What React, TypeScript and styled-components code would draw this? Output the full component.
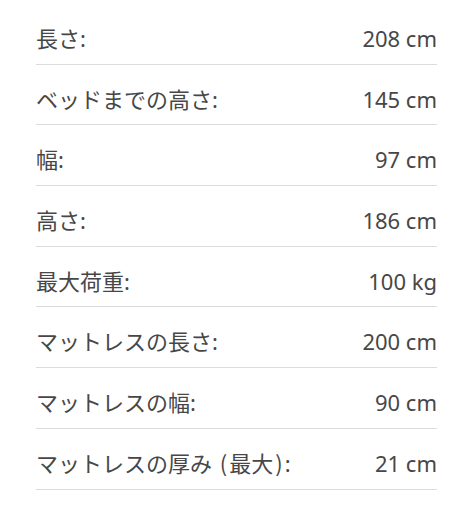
import React from "react";
import styled, { createGlobalStyle } from "styled-components";

const Global = createGlobalStyle`
  html, body { margin: 0; padding: 0; background: #ffffff; }
  body { font-family: "Noto Sans", "Noto Sans CJK JP", sans-serif; }
`;

const List = styled.dl`
  margin: 0;
  padding: 4px 36px 0 36px;
  display: flex;
  flex-direction: column;
`;

const Row = styled.div`
  display: flex;
  justify-content: space-between;
  align-items: center;
  padding: 19px 0 10.7px 0;
  height: 30px;
  border-bottom: 1px solid #dcdcdc;
  font-size: 22px;
  line-height: 30px;
  color: #474747;
`;

const Label = styled.dt`
  margin: 0;
`;

const Paren = styled.span`
  font-family: "Noto Sans CJK JP", sans-serif;
  padding: 0 2px;
`;

const Value = styled.dd`
  margin: 0;
`;

const specs: [string, string][] = [
  ["長さ:", "208 cm"],
  ["ベッドまでの高さ:", "145 cm"],
  ["幅:", "97 cm"],
  ["高さ:", "186 cm"],
  ["最大荷重:", "100 kg"],
  ["マットレスの長さ:", "200 cm"],
  ["マットレスの幅:", "90 cm"],
  ["マットレスの厚み (最大):", "21 cm"],
];

function renderLabel(text: string) {
  return text.split(/([()])/).map((part, i) =>
    part === "(" || part === ")" ? <Paren key={i}>{part}</Paren> : part
  );
}

export default function App() {
  return (
    <>
      <Global />
      <List>
        {specs.map(([k, v]) => (
          <Row key={k}>
            <Label>{renderLabel(k)}</Label>
            <Value>{v}</Value>
          </Row>
        ))}
      </List>
    </>
  );
}
